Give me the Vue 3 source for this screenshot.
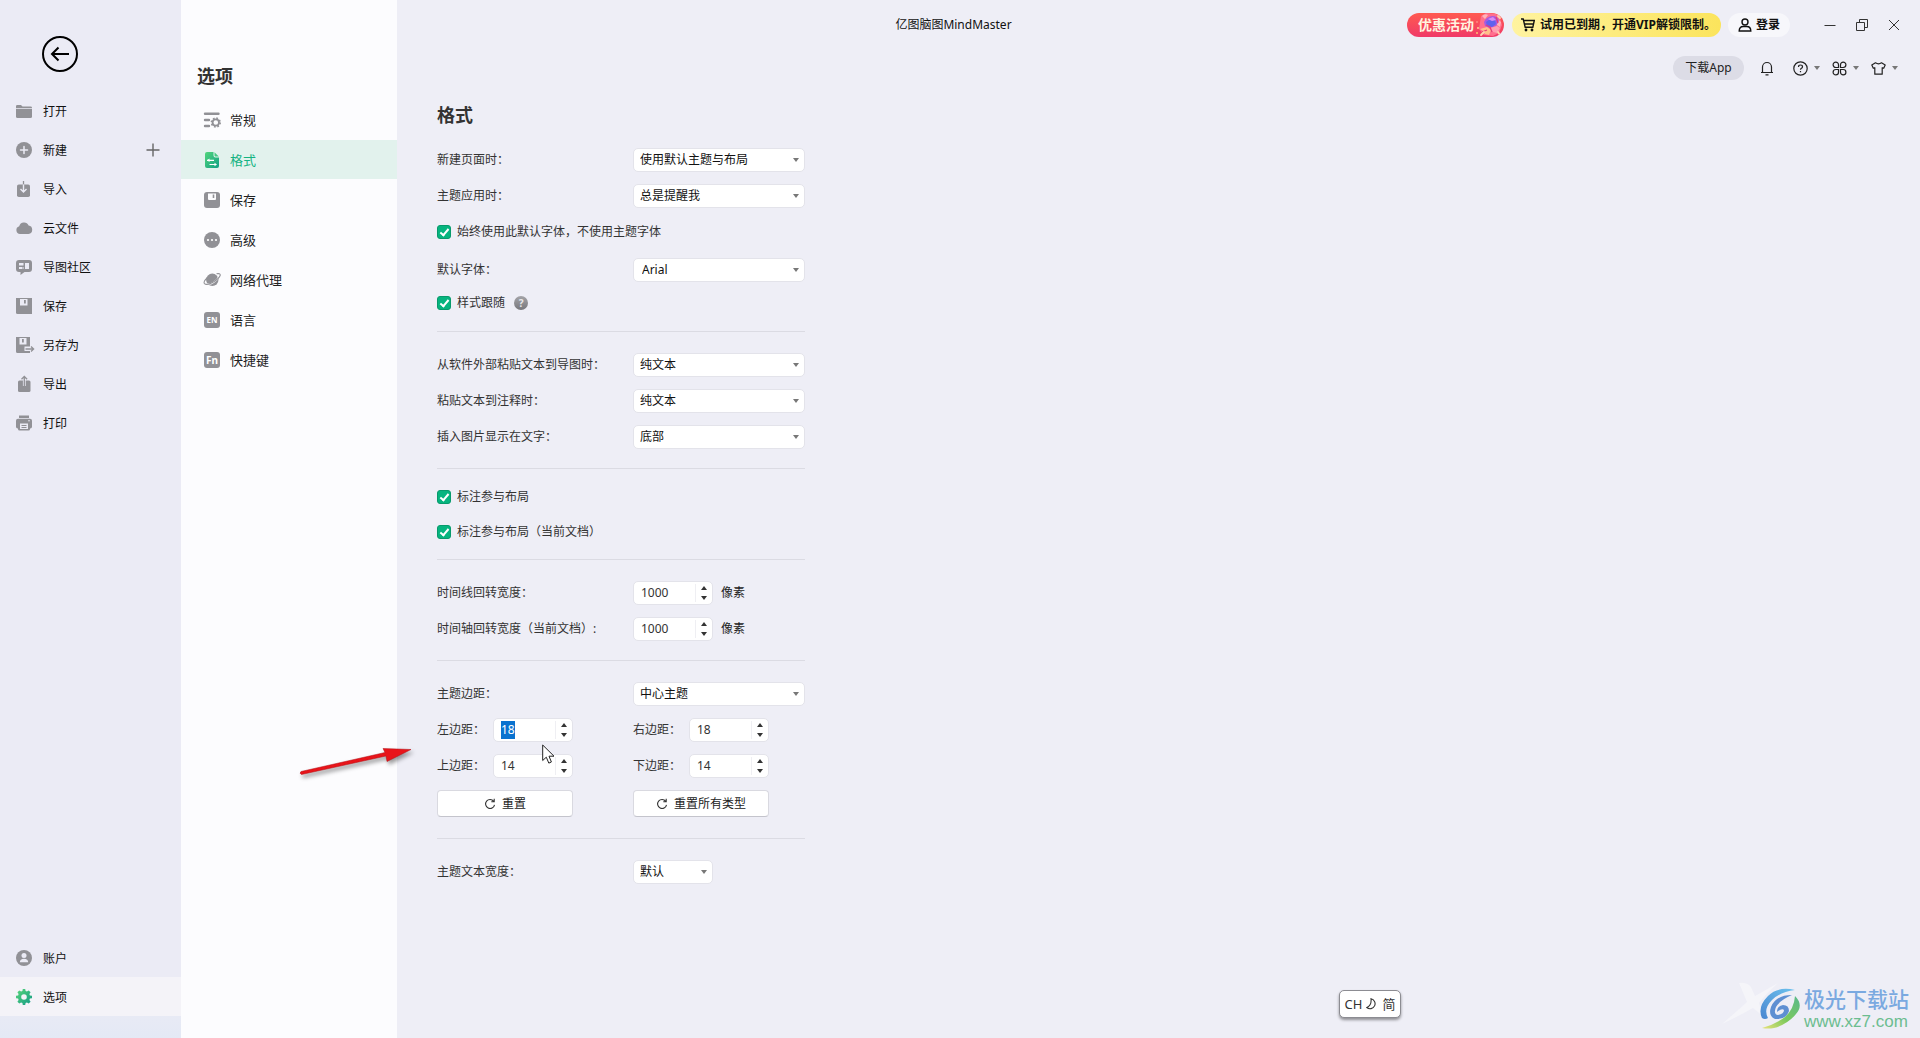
<script setup>
import { onMounted, ref } from 'vue'

const menu = [
  { label: '打开', icon: '<path d="M0 3.2Q0 2 1.200 2H5l1.500 1.500H14.500Q16 3.500 16 4.800V5.200H0z"/><path d="M0 6H16V13.500Q16 15 14.500 15H1.500Q0 15 0 13.500z"/>' },
  { label: '新建', plus: true, icon: '<circle cx="8" cy="8" r="8"/><path d="M8 4.500v7M4.500 8h7" stroke="#ebebf5" stroke-width="1.500" stroke-linecap="round"/>' },
  { label: '导入', icon: '<path d="M2.800 3.500H12.200Q14 3.500 14 5.300V14.200Q14 16 12.200 16H2.800Q1 16 1 14.200V5.300Q1 3.500 2.800 3.500z"/><path d="M7.500 0v3.500" stroke="#919196" stroke-width="1.300"/><path d="M7.500 3.500v7M4.500 8l3 3 3-3" fill="none" stroke="#ebebf5" stroke-width="1.400"/>' },
  { label: '云文件', icon: '<path d="M4 14a4 4 0 0 1-.8-7.800A5 5 0 0 1 12.600 5.500 4.300 4.300 0 0 1 12.500 14z"/>' },
  { label: '导图社区', icon: '<path d="M3 1h10q3 0 3 3v6q0 3-3 3H8.500L4.500 16v-3H3q-3 0-3-3V4q0-3 3-3z"/><path d="M3 4h4.500v2.500H3zM3 8h3v2H3zM9 4h4v6H9zM6.500 8h1v2h-1z" fill="#ebebf5"/>' },
  { label: '保存', icon: '<path d="M0 0h16v16H1.500Q0 16 0 14.500z"/><path d="M4 1h7.500v6.500H4z" fill="#ebebf5"/><path d="M8 2h1.800v3.500H8z"/>' },
  { label: '另存为', icon: '<path d="M0 0h14v9.500H8.500V16H1.500Q0 16 0 14.500z"/><path d="M8 14h6v2H8z"/><path d="M3.500 1h7v6.500h-7z" fill="#ebebf5"/><path d="M6 2h1.800v3.500H6z"/><path d="M9.500 12h8M15 9.500l2.600 2.500-2.600 2.500" fill="none" stroke="#919196" stroke-width="1.300"/>' },
  { label: '导出', icon: '<path d="M3.500 4.500H13Q14.500 4.500 14.500 6V14.500Q14.500 16 13 16H3.500Q2 16 2 14.500V6Q2 4.500 3.500 4.500z"/><path d="M8.300 4v6" stroke="#ebebf5" stroke-width="2.800"/><path d="M8.300 10V1M5.500 3.300l2.800-2.800 2.800 2.800" fill="none" stroke="#919196" stroke-width="1.300"/>' },
  { label: '打印', icon: '<path d="M3 0.500h10v2.500H3zM2 3.800h12q2 0 2 2v6q0 1.700-1.700 1.700H14V8H2v5.500h-.3Q0 13.500 0 11.800V5.800q0-2 2-2z"/><path d="M2 7h12v7q0 1.500-1.500 1.500h-9Q2 15.500 2 14z"/><path d="M4 8.500h8v5.500H4z" fill="#ebebf5"/><path d="M5.500 10h5v1h-5zM5.500 12h5v1h-5z"/><circle cx="13" cy="5.800" r=".8" fill="#ebebf5"/>' },
]

const bottomMenu = [
  { label: '账户', icon: '<circle cx="8" cy="8" r="8"/><circle cx="8" cy="5.600" r="2.500" fill="#ebebf5"/><path d="M3.800 12.300q.2-3.600 4.200-3.600t4.200 3.600z" fill="#ebebf5"/>' },
  { label: '选项', active: true, icon: '<defs><linearGradient id="gearFill" x1="0" y1="0" x2="1" y2="1"><stop offset="0" stop-color="#5ad67a"/><stop offset="1" stop-color="#119a86"/></linearGradient></defs><path fill="url(#gearFill)" fill-rule="evenodd" d="M6.800 0h2.400l.4 2.100 1.300.5L12.700 1.400l1.900 1.900-1.200 1.800.5 1.300 2.100.4v2.400l-2.100.4-.5 1.300 1.200 1.800-1.900 1.900-1.800-1.200-1.300.5-.4 2.100H6.800l-.4-2.100-1.300-.5-1.800 1.200-1.900-1.900 1.200-1.800-.5-1.300L0 9.200V6.800l2.100-.4.500-1.300L1.400 3.300l1.900-1.900 1.800 1.200 1.300-.5zM8 5.200a2.800 2.800 0 1 0 0 5.600 2.800 2.800 0 0 0 0-5.600z"/>' },
]

const tabs = [
  { label: '常规', icon: '<g fill="none" stroke="#919196" stroke-width="2.400" stroke-linecap="round"><path d="M1 1.800h13.500M1 8h4M1 14h4"/></g><circle cx="11.800" cy="10.500" r="3.200" fill="none" stroke="#919196" stroke-width="1.800"/><circle cx="11.800" cy="10.500" r="4.400" fill="none" stroke="#919196" stroke-width="1.600" stroke-dasharray="1.700 1.755"/>' },
  { label: '格式', active: true, icon: '<defs><linearGradient id="docFill" x1="0" y1="0" x2="1" y2="1"><stop offset="0" stop-color="#52d57c"/><stop offset="1" stop-color="#12a084"/></linearGradient></defs><path fill="url(#docFill)" d="M3 0h6.500v3.500Q9.500 5.500 11.500 5.500H15V14q0 2-2 2H3q-2 0-2-2V2q0-2 2-2z"/><path d="M10.500 0.300 14.800 4.500h-3.300q-1 0-1-1z" fill="#46c983"/><path d="M3 8.300h7M12 12.500H5.500" stroke="#fff" stroke-width="1.200"/><path d="M5.500 6.500v3.600L3 8.300zM10.500 10.700v3.600l2.500-1.800z" fill="#fff"/>' },
  { label: '保存', icon: '<rect width="16" height="16" rx="3"/><path d="M4 1.500h8V7q0 1-1 1H5Q4 8 4 7z" fill="#fcfcfe"/><path d="M8.700 2.500h1.600v3.500H8.700z"/>' },
  { label: '高级', icon: '<circle cx="8" cy="8" r="8"/><g fill="#fff"><circle cx="4" cy="8" r="1.100"/><circle cx="8" cy="8" r="1.100"/><circle cx="12" cy="8" r="1.100"/></g>' },
  { label: '网络代理', icon: '<circle cx="8.300" cy="7.800" r="6.200"/><path d="M1.200 11.300Q5 13.300 9.500 10.300T15.500 3.500" fill="none" stroke="#fcfcfe" stroke-width="1.500"/><path d="M3 5.800Q-.8 9.800.3 11.300 2.300 13.800 8.500 10.600 15.500 6.500 16.300 3.200 16.300 1 12.500 1.800" fill="none" stroke="#919196" stroke-width="1.100"/>' },
  { label: '语言', icon: '<rect width="16" height="16" rx="3"/><text x="8" y="11.300" text-anchor="middle" font-size="8" font-weight="700" fill="#fff">EN</text>' },
  { label: '快捷键', icon: '<rect width="16" height="16" rx="3"/><text x="8" y="12" text-anchor="middle" font-size="10" font-weight="700" fill="#fff">Fn</text>' },
]

const pasteRows = [
  { id: 'paste-map', label: '从软件外部粘贴文本到导图时：', value: '纯文本' },
  { id: 'paste-note', label: '粘贴文本到注释时：', value: '纯文本' },
  { id: 'image-pos', label: '插入图片显示在文字：', value: '底部' },
]

const widthRows = ref([
  { id: 'line-width', label: '时间线回转宽度：', value: 1000 },
  { id: 'axis-width', label: '时间轴回转宽度（当前文档）:', value: 1000 },
])

const margins = ref([
  { id: 'm-left', label: '左边距：', value: 18 },
  { id: 'm-right', label: '右边距：', value: 18 },
  { id: 'm-top', label: '上边距：', value: 14 },
  { id: 'm-bottom', label: '下边距：', value: 14 },
])

onMounted(() => {
  const field = document.getElementById('m-left')
  field.focus()
  field.select()
})
</script>

<template>
  <div class="app">
    <aside class="sidebar">
      <button class="back" aria-label="返回">
        <svg width="36" height="36" viewBox="0 0 36 36" fill="none" stroke="#000" stroke-width="2"><circle cx="18" cy="18" r="17" /><path d="M27 18H10M16.500 11.500 10 18l6.500 6.500" /></svg>
      </button>
      <nav class="menu">
        <button v-for="m in menu" :key="m.label" class="menu-item">
          <svg class="icon" viewBox="0 0 16 16" v-html="m.icon"></svg>
          <span class="menu-label">{{ m.label }}</span>
          <svg v-if="m.plus" width="14" height="14" viewBox="0 0 14 14" stroke="#666" stroke-width="1.400"><path d="M7 0.500v13M0.500 7h13" /></svg>
        </button>
      </nav>
      <nav class="menu menu-bottom">
        <button v-for="m in bottomMenu" :key="m.label" class="menu-item" :class="{ active: m.active }">
          <svg class="icon" viewBox="0 0 16 16" v-html="m.icon"></svg>
          <span class="menu-label">{{ m.label }}</span>
        </button>
      </nav>
    </aside>

    <section class="panel">
      <h1 class="title">选项</h1>
      <nav class="tabs">
        <button v-for="t in tabs" :key="t.label" class="tab" :class="{ active: t.active }">
          <svg class="icon" viewBox="0 0 16 16" v-html="t.icon"></svg>
          <span>{{ t.label }}</span>
        </button>
      </nav>
    </section>

    <main class="main">
      <header class="titlebar">
        <div class="app-name">亿图脑图MindMaster</div>
        <div class="tools">
          <button class="promo">
            <span>优惠活动</span>
            <svg width="28" height="24" viewBox="0 0 28 24">
              <path d="M7 3 12 0l10 1 4 4 2 7-3 8-6 3-9-1-5-6z" fill="#ff6f8e" />
              <path d="M8 3q3-3 6-1l-3 4zM23 6l4 3-1 5-3-2z" fill="#ffb3b8" />
              <path d="M10 9q2-5 8-6 6 0 7 5l-3 5-6 2-5-2z" fill="#a65ae0" />
              <path d="M12 9q4-4 9-2l1 4-4 3-5-1z" fill="#5f62ee" />
              <path d="M14 6l5-2 3 3-4 1z" fill="#d98cf5" />
              <path d="M6 16l7-2 4 3-2 5-4-1-2-3z" fill="#ffc08a" />
              <path d="M16 15l7-2 3 2-3 5-4-1z" fill="#ff9db0" />
              <path d="M12 12l4 2 2 5M22 4l2 6M8 19l5-2" stroke="#e63c78" stroke-width="1.200" fill="none" />
              <path d="M10 19l-3 3M24 19l2 3M24 3l2 2" stroke="#ffd6ae" stroke-width="1.800" stroke-linecap="round" />
              <circle cx="3" cy="9" r=".8" fill="#ffb09a" /><circle cx="4" cy="15" r="1" fill="#ffcf8c" /><circle cx="3" cy="20" r="1" fill="#ffc070" />
            </svg>
          </button>
          <button class="vip">
            <svg width="14" height="14" viewBox="0 0 14 14" fill="none" stroke="#111" stroke-width="1.400"><path d="M0 1h2.200l2 8.300h7.600L13.300 2.500H3M3.800 6h8.500" /><circle cx="5" cy="12" r=".7" fill="#111" /><circle cx="11" cy="12" r=".7" fill="#111" /></svg>
            <span>试用已到期，开通VIP解锁限制。</span>
          </button>
          <button class="login">
            <svg width="14" height="14" viewBox="0 0 14 14" fill="none" stroke="#111" stroke-width="1.400"><circle cx="7" cy="4" r="3" /><path d="M1.200 13q0-4.500 4-4.500h3.600q4 0 4 4.500z" /></svg>
            <span>登录</span>
          </button>
          <div class="window-buttons">
            <button aria-label="最小化"><svg width="12" height="12" viewBox="0 0 12 12" fill="none" stroke="#333"><path d="M0.500 6.500h11" /></svg></button>
            <button aria-label="还原"><svg width="12" height="12" viewBox="0 0 12 12" fill="none" stroke="#333"><path d="M0.500 3.500h8v8h-8zM3.500 3.500v-3h8v8h-3" /></svg></button>
            <button aria-label="关闭"><svg width="12" height="12" viewBox="0 0 12 12" fill="none" stroke="#333"><path d="M1 1l10 10M11 1 1 11" /></svg></button>
          </div>
        </div>
      </header>

      <div class="toolbar">
        <button class="download">下载App</button>
        <button class="tool bell" aria-label="通知"><svg width="14" height="15" viewBox="0 0 14 15" fill="none" stroke="#222" stroke-width="1.200"><path d="M1 11.500h12M2.500 11.500V6a4.500 4.500 0 0 1 9 0v5.500M5.500 13.800h3" /></svg></button>
        <button class="tool" aria-label="帮助">
          <svg width="15" height="15" viewBox="0 0 15 15" fill="none" stroke="#222" stroke-width="1.200"><circle cx="7.500" cy="7.500" r="6.700" /><path d="M5.500 6q0-2 2-2t2 1.800q0 1-1 1.500t-1 1.500M7.500 10v1.300" /></svg>
          <svg class="caret" width="6" height="4" viewBox="0 0 6 4"><path d="M0 0h6L3 4z" /></svg>
        </button>
        <button class="tool" aria-label="应用">
          <svg width="15" height="15" viewBox="0 0 15 15" fill="none" stroke="#222" stroke-width="1.200"><path d="M6.500 6.500H3.800A2.700 2.700 0 1 1 6.500 3.800zM8.500 6.500V3.800a2.700 2.700 0 1 1 2.700 2.700zM6.500 8.500v2.700a2.700 2.700 0 1 1-2.700-2.700zM8.500 8.500h2.700a2.700 2.700 0 1 1-2.700 2.700z" /></svg>
          <svg class="caret" width="6" height="4" viewBox="0 0 6 4"><path d="M0 0h6L3 4z" /></svg>
        </button>
        <button class="tool" aria-label="皮肤">
          <svg width="15" height="15" viewBox="0 0 15 15" fill="none" stroke="#222" stroke-width="1.200" stroke-linejoin="round"><path d="M4.500 1.800q3 2 6 0L14.200 4l-1.500 3.200-1.500-.5v6.500H3.800V6.700l-1.500.5L.8 4z" /></svg>
          <svg class="caret" width="6" height="4" viewBox="0 0 6 4"><path d="M0 0h6L3 4z" /></svg>
        </button>
      </div>

      <form class="form" @submit.prevent>
        <h2 class="title">格式</h2>

        <div class="group first">
          <div class="rows">
            <div class="row">
              <label for="new-page">新建页面时：</label>
              <span class="select"><select id="new-page"><option>使用默认主题与布局</option></select><svg class="caret" width="6" height="4" viewBox="0 0 6 4"><path d="M0 0h6L3 4z" /></svg></span>
            </div>
            <div class="row">
              <label for="theme-apply">主题应用时：</label>
              <span class="select"><select id="theme-apply"><option>总是提醒我</option></select><svg class="caret" width="6" height="4" viewBox="0 0 6 4"><path d="M0 0h6L3 4z" /></svg></span>
            </div>
          </div>
          <label class="check"><input type="checkbox" checked />始终使用此默认字体，不使用主题字体</label>
          <div class="row">
            <label for="font">默认字体：</label>
            <span class="select font"><select id="font"><option>Arial</option></select><svg class="caret" width="6" height="4" viewBox="0 0 6 4"><path d="M0 0h6L3 4z" /></svg></span>
          </div>
          <div class="follow">
            <label class="check"><input type="checkbox" checked />样式跟随</label>
            <button type="button" class="help" aria-label="说明">?</button>
          </div>
        </div>

        <div class="group rows">
          <div v-for="r in pasteRows" :key="r.id" class="row">
            <label :for="r.id">{{ r.label }}</label>
            <span class="select"><select :id="r.id"><option>{{ r.value }}</option></select><svg class="caret" width="6" height="4" viewBox="0 0 6 4"><path d="M0 0h6L3 4z" /></svg></span>
          </div>
        </div>

        <div class="group checks">
          <label class="check"><input type="checkbox" checked />标注参与布局</label>
          <label class="check"><input type="checkbox" checked />标注参与布局（当前文档）</label>
        </div>

        <div class="group rows">
          <div v-for="r in widthRows" :key="r.id" class="row">
            <label :for="r.id">{{ r.label }}</label>
            <span class="spin">
              <input :id="r.id" v-model="r.value" inputmode="numeric" />
              <span class="steps">
                <button type="button" aria-label="增加" @click="r.value++"><svg width="6" height="4" viewBox="0 0 6 4"><path d="M0 4h6L3 0z" /></svg></button>
                <button type="button" aria-label="减少" @click="r.value--"><svg width="6" height="4" viewBox="0 0 6 4"><path d="M0 0h6L3 4z" /></svg></button>
              </span>
            </span>
            <span class="unit">像素</span>
          </div>
        </div>

        <div class="group">
          <div class="rows">
            <div class="row">
              <label for="margin-type">主题边距：</label>
              <span class="select"><select id="margin-type"><option>中心主题</option></select><svg class="caret" width="6" height="4" viewBox="0 0 6 4"><path d="M0 0h6L3 4z" /></svg></span>
            </div>
            <div class="margins">
              <div v-for="m in margins" :key="m.id" class="margin">
                <label :for="m.id">{{ m.label }}</label>
                <span class="spin">
                  <input :id="m.id" v-model="m.value" inputmode="numeric" />
                  <span class="steps">
                    <button type="button" aria-label="增加" @click="m.value++"><svg width="6" height="4" viewBox="0 0 6 4"><path d="M0 4h6L3 0z" /></svg></button>
                    <button type="button" aria-label="减少" @click="m.value--"><svg width="6" height="4" viewBox="0 0 6 4"><path d="M0 0h6L3 4z" /></svg></button>
                  </span>
                </span>
              </div>
            </div>
          </div>
          <div class="resets">
            <button v-for="b in ['重置', '重置所有类型']" :key="b" type="button" class="reset">
              <svg width="12" height="12" viewBox="0 0 12 12" fill="none" stroke="#333" stroke-width="1.100"><path d="M9.700 3.300A4.500 4.500 0 1 0 10.500 6.800M10.200 0.800v2.900H7.300" /></svg>
              {{ b }}
            </button>
          </div>
        </div>

        <div class="group last">
          <div class="row">
            <label for="text-width">主题文本宽度：</label>
            <span class="select small"><select id="text-width"><option>默认</option></select><svg class="caret" width="6" height="4" viewBox="0 0 6 4"><path d="M0 0h6L3 4z" /></svg></span>
          </div>
        </div>
      </form>
    </main>

    <svg class="pointer-arrow" width="124" height="40" viewBox="0 0 124 40">
      <path d="M2 28.500 86 9.500 84 5.500 112 6.500 88 18.500 87 13 2.500 31.500Q0 30.500 2 28.500z" fill="#e8141a" stroke="#b00d12" stroke-width=".5" />
    </svg>
    <svg class="cursor" width="14" height="21" viewBox="0 0 14 21"><path d="M.7 1v15.500l3.600-3.300 2.500 5.900 2.600-1.100L7 12.200h5z" fill="#fff" stroke="#222" /></svg>

    <div class="ime">
      <span>CH</span>
      <svg width="12" height="12" viewBox="0 0 12 12" fill="none" stroke="#333" stroke-width="1.100"><path d="M5 .8a5 5 0 1 1-4.200 8.700Q5.800 7.500 5 .8z" /></svg>
      <span>简</span>
    </div>

    <div class="watermark">
      <svg width="82" height="48" viewBox="0 0 82 48">
        <defs>
          <linearGradient id="skyBlade" x1="1" y1="0" x2="0" y2="1"><stop offset="0" stop-color="#6cc2ee" /><stop offset="1" stop-color="#4a86d0" /></linearGradient>
          <linearGradient id="leafBlade" x1="1" y1="0" x2="0" y2="1"><stop offset="0" stop-color="#58b98c" /><stop offset=".55" stop-color="#7cc95c" /><stop offset="1" stop-color="#e9e27a" /></linearGradient>
        </defs>
        <path d="M17 1q8-1 12 4l4 9L56 1q-12 11-19 20l4 13-10-8Q17 34 0 42q14-12 25-22z" fill="#fff" opacity=".4" />
        <path d="M73 8Q56 4 46 14 35 25 40 36q3 2 6 0-5-9 4-18 8-8 23-10z" fill="url(#skyBlade)" />
        <path d="M70 13q-16 0-21 12-3 9 4 12 11 1 14-8 0-6-6-6-6 1-6 7 5-4 7-2 0 4-6 5-5-1-2-8 4-7 16-12z" fill="#5e8fd2" />
        <path d="M73 14q9 9 1 18-8 10-22 14-6 1-12 0 14-4 23-11 9-8 10-21z" fill="url(#leafBlade)" />
      </svg>
      <div class="watermark-text">
        <div class="site">极光下载站</div>
        <div class="url">www.xz7.com</div>
      </div>
    </div>
  </div>
</template>

<style>
body {
  margin: 0;
}
</style>

<style scoped>
.app {
  position: relative;
  display: flex;
  min-height: 100vh;
  overflow: hidden;
  background: #eeeef6;
  color: #333;
  font: 12px/20px "Noto Sans", "Noto Sans CJK SC", sans-serif;
}
button,
input,
select {
  margin: 0;
  padding: 0;
  border: 0;
  background: none;
  color: inherit;
  font: inherit;
}
svg {
  flex: none;
  display: block;
}
.icon {
  width: 16px;
  height: 16px;
  overflow: visible;
  fill: #919196;
}
.title {
  margin: 0;
  font-size: 18px;
  line-height: 28px;
  font-weight: 700;
  color: #333;
}

.sidebar {
  flex: none;
  display: flex;
  flex-direction: column;
  width: 181px;
  background: linear-gradient(#ebebf5 0, #ebebf5 96%, #e4e9f5 100%);
}
.back {
  align-self: flex-start;
  margin: 36px 0 19px 42px;
}
.menu {
  display: flex;
  flex-direction: column;
}
.menu-bottom {
  margin-top: auto;
  padding-bottom: 22px;
}
.menu-item {
  display: flex;
  align-items: center;
  gap: 11px;
  height: 39px;
  padding: 0 21px 0 16px;
  color: #111;
  text-align: left;
}
.menu-item.active {
  background: #f4f3f8;
}
.menu-label {
  flex: 1;
  padding-top: 2px;
}

.panel {
  flex: none;
  width: 216px;
  background: #fcfcfe;
}
.panel .title {
  margin: 62px 0 10px 16px;
}
.tabs {
  display: flex;
  flex-direction: column;
  gap: 1px;
}
.tab {
  display: flex;
  align-items: center;
  gap: 10px;
  height: 39px;
  padding: 0 23px;
  font-size: 13px;
  color: #222;
}
.tab.active {
  background: #e2f2ed;
  color: #14b382;
}

.main {
  flex: 1;
  min-width: 0;
}
.titlebar {
  display: flex;
  align-items: center;
  height: 24px;
  padding: 13px 20px 14px 103px;
}
.app-name {
  flex: 1;
  text-align: center;
  color: #111;
}
.tools {
  display: flex;
  align-items: center;
}
.promo,
.vip,
.login {
  display: flex;
  align-items: center;
  height: 24px;
  border-radius: 12px;
  font-weight: 700;
  color: #111;
  white-space: nowrap;
}
.promo {
  width: 97px;
  padding-left: 11px;
  box-sizing: border-box;
  overflow: hidden;
  background: linear-gradient(#ff5a50, #f03a68);
  color: #fff4e0;
  font-size: 14px;
}
.vip {
  gap: 5px;
  width: 209px;
  margin-left: 8px;
  padding-left: 9px;
  box-sizing: border-box;
  background: linear-gradient(90deg, #fff3a0, #fbe45c);
}
.login {
  gap: 4px;
  margin-left: 7px;
  padding: 0 10px;
  background: #f7f7fb;
}
.window-buttons {
  display: flex;
  gap: 20px;
  margin-left: 34px;
}
.toolbar {
  display: flex;
  align-items: center;
  justify-content: flex-end;
  gap: 12px;
  height: 24px;
  margin-top: 5px;
  padding-right: 22px;
}
.download {
  width: 71px;
  height: 24px;
  border-radius: 12px;
  background: #dcdce6;
  color: #222;
}
.tool {
  display: flex;
  align-items: center;
  gap: 6px;
}
.bell {
  margin: 0 7px 0 4px;
}
.caret {
  fill: #777;
}

.form {
  max-width: 368px;
  margin-left: 40px;
}
.form .title {
  margin: 21px 0 19px;
}
.group {
  padding: 21px 0 19px;
  border-bottom: 1px solid #dbdbe3;
}
.group.first {
  padding: 0 0 16px;
}
.group.checks {
  display: flex;
  flex-direction: column;
  gap: 11px;
  padding: 16px 0 15px;
}
.group.last {
  border: 0;
}
.rows {
  display: flex;
  flex-direction: column;
  gap: 12px;
}
.row {
  display: grid;
  grid-template-columns: 196px auto 1fr;
  align-items: center;
  height: 24px;
}
.first > .check {
  margin: 12px 0 14px;
}
.follow {
  display: flex;
  align-items: center;
  gap: 9px;
  margin-top: 9px;
}
.check {
  display: flex;
  align-items: center;
  gap: 6px;
  height: 24px;
}
.check input {
  appearance: none;
  display: grid;
  place-items: center;
  width: 14px;
  height: 14px;
  border: 1px solid #079a6c;
  border-radius: 3px;
  background: #06b47f;
}
.check input:checked::before {
  content: "";
  width: 3px;
  height: 7px;
  margin-bottom: 2px;
  border: solid #fff;
  border-width: 0 2px 2px 0;
  transform: rotate(40deg);
}
.help {
  width: 14px;
  height: 14px;
  border-radius: 50%;
  background: linear-gradient(#a4a4a8, #77777c);
  color: #e8e8ec;
  font-size: 10px;
  line-height: 14px;
  font-weight: 700;
}
.select {
  display: grid;
  grid-template-columns: 1fr 12px;
  align-items: center;
  width: 172px;
}
.select.small {
  width: 80px;
}
.select select {
  grid-area: 1 / 1 / 2 / 3;
  appearance: none;
  height: 24px;
  padding: 0 20px 0 6px;
  border: 1px solid #e3e3ea;
  border-radius: 5px;
  background: #fff;
  color: #111;
}
.select.font select {
  padding-left: 8px;
}
.select .caret {
  grid-area: 1 / 2;
  pointer-events: none;
}
.spin {
  display: flex;
  width: 80px;
  height: 24px;
  box-sizing: border-box;
  border: 1px solid #e3e3ea;
  border-radius: 5px;
  background: #fff;
}
.spin input {
  flex: 1;
  min-width: 0;
  height: 18px;
  margin: 2px 0;
  padding-left: 7px;
  border-right: 1px solid #efeff3;
  outline: 0;
  line-height: 18px;
}
.spin input::selection {
  background: #0a72cf;
  color: #fff;
}
.steps {
  display: flex;
  flex-direction: column;
  justify-content: space-between;
  width: 16px;
  padding: 4px 0;
  box-sizing: border-box;
  fill: #333;
}
.steps button {
  display: flex;
  justify-content: center;
}
.unit {
  margin-left: 8px;
  color: #222;
}
.margins {
  display: grid;
  grid-template-columns: 196px 1fr;
  row-gap: 12px;
}
.margin {
  display: grid;
  grid-template-columns: 56px auto;
  justify-content: start;
  align-items: center;
}
.resets {
  display: grid;
  grid-template-columns: 136px 136px;
  column-gap: 60px;
  margin: 12px 0 2px;
}
.reset {
  display: flex;
  align-items: center;
  justify-content: center;
  gap: 6px;
  height: 27px;
  border: 1px solid #d9d9e0;
  border-bottom-color: #c4c4cc;
  border-radius: 4px;
  background: #fff;
  color: #222;
}

.pointer-arrow {
  position: absolute;
  left: 299px;
  top: 743px;
  filter: drop-shadow(2px 3px 2px rgba(0, 0, 0, 0.4));
}
.cursor {
  position: absolute;
  left: 542px;
  top: 744px;
}
.ime {
  position: absolute;
  right: 519px;
  bottom: 20px;
  display: flex;
  align-items: center;
  justify-content: center;
  gap: 4px;
  width: 60px;
  height: 26px;
  border: 1px solid #8c8c92;
  border-radius: 5px;
  background: #fff;
  box-shadow: 0 2px 3px rgba(0, 0, 0, 0.4);
  font-size: 13px;
}
.watermark {
  position: absolute;
  right: 11px;
  bottom: 6px;
  display: flex;
}
.watermark-text {
  padding-top: 4px;
}
.site {
  font-size: 21px;
  line-height: 26px;
  font-weight: 500;
  color: #7aa9e0;
}
.url {
  font: 17px/20px "Liberation Sans", Arial, sans-serif;
  color: #6cbd90;
}
</style>
